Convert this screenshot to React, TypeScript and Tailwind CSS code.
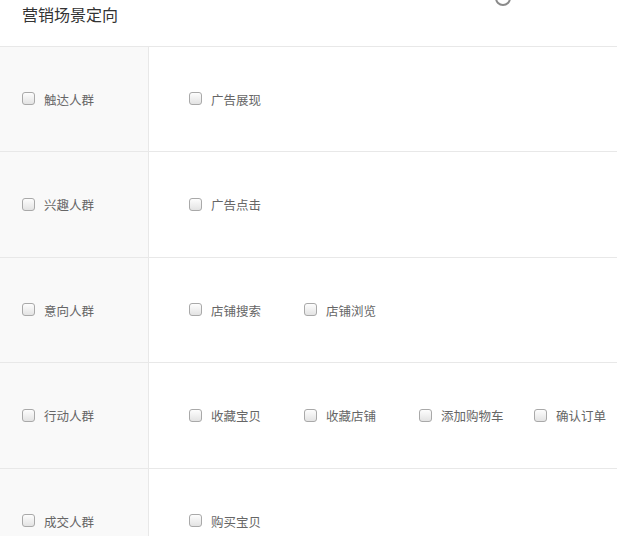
import {useState} from "react";

interface Group {
  id: string;
  label: string;
  options: string[];
}

const groups: Group[] = [
  {id: "reach", label: "触达人群", options: ["广告展现"]},
  {id: "interest", label: "兴趣人群", options: ["广告点击"]},
  {id: "intent", label: "意向人群", options: ["店铺搜索", "店铺浏览"]},
  {id: "action", label: "行动人群", options: ["收藏宝贝", "收藏店铺", "添加购物车", "确认订单"]},
  {id: "deal", label: "成交人群", options: ["购买宝贝"]},
];

const Box = ({checked, onClick}: {checked: boolean; onClick: () => void}) => (
  <span
    onClick={onClick}
    className={`-mt-[3px] mr-[9px] inline-block h-[13px] w-[13px] shrink-0 cursor-pointer rounded-[3px] border border-[#a9a9a9] ${
      checked ? "bg-[#3089dc]" : "bg-gradient-to-b from-[#fdfdfd] to-[#e3e3e3]"
    }`}
  />
);

const App = () => {
  const [checked, setChecked] = useState<Record<string, boolean>>({});

  const toggle = (key: string) => {
    setChecked((prev) => ({...prev, [key]: !prev[key]}));
  };

  return (
    <div
      className="relative h-[536px] w-[617px] overflow-hidden bg-white"
      style={{fontFamily: '"Noto Sans CJK SC", "Microsoft YaHei", sans-serif'}}
    >
      {/* loading ring peeking in from the top */}
      <svg className="absolute left-[494px] top-[-11px]" width="18" height="18" viewBox="0 0 18 18">
        <circle cx="9" cy="9" r="7" fill="none" stroke="#8a8a8a" strokeWidth="2" />
      </svg>

      <div className="h-[46px] pl-[22px] pt-[2px] text-[16px] leading-[24px] text-[#333]">营销场景定向</div>

      <div className="border-t border-[#e8e8e8]">
        {groups.map((group, i) => (
          <div
            key={group.id}
            className={`flex border-b border-[#e8e8e8] pt-[2px] ${i % 2 === 0 ? "h-[105px]" : "h-[106px]"}`}
          >
            <div className="-mt-[2px] flex w-[149px] shrink-0 items-center border-r border-[#e8e8e8] bg-[#f9f9f9] pl-[22px] pt-[2px] text-[12.5px] text-[#666]">
              <Box checked={!!checked[group.id]} onClick={() => toggle(group.id)} />
              <span>{group.label}</span>
            </div>
            <div className="flex flex-1 items-center pl-[40px] text-[12.5px] text-[#666]">
              {group.options.map((opt) => (
                <label key={opt} className="flex w-[115px] shrink-0 items-center whitespace-nowrap">
                  <Box checked={!!checked[group.id + opt]} onClick={() => toggle(group.id + opt)} />
                  <span>{opt}</span>
                </label>
              ))}
            </div>
          </div>
        ))}
      </div>
    </div>
  );
};

export default App;
